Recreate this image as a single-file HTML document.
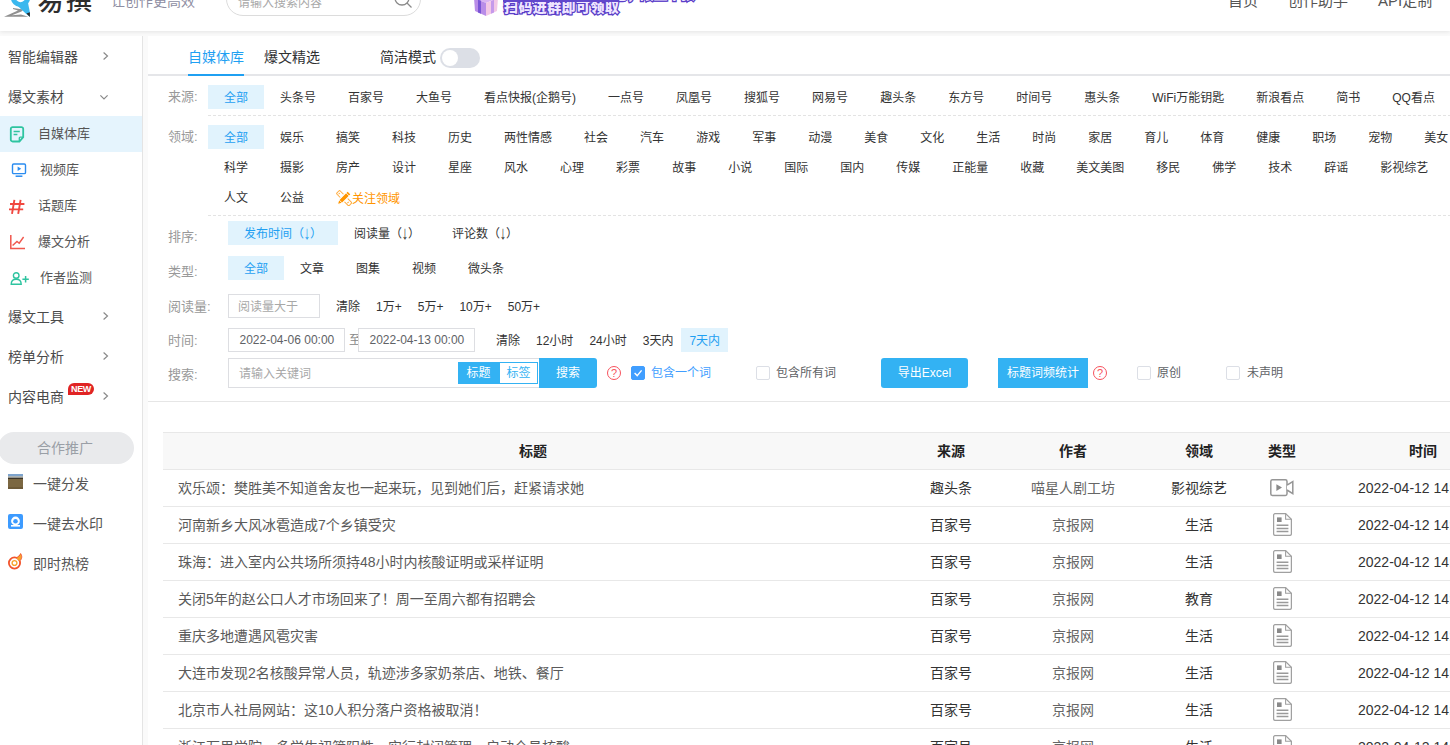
<!DOCTYPE html>
<html lang="zh-CN">
<head>
<meta charset="utf-8">
<title>易撰 - 自媒体库</title>
<style>
*{box-sizing:border-box;margin:0;padding:0}
html,body{width:1450px;height:745px;overflow:hidden;background:#fff}
body{font-family:"Liberation Sans","Noto Sans CJK SC",sans-serif;font-size:12px;color:#333;position:relative}
a{text-decoration:none;color:inherit}
#gap{position:absolute;left:0;top:31px;width:1450px;height:714px;background:#fafafa}
#hdr{position:absolute;left:0;top:0;width:1450px;height:31px;background:#fff;box-shadow:0 1px 4px rgba(0,0,0,.085);z-index:5}
#hdr .t{position:absolute;white-space:nowrap}
#side{position:absolute;left:0;top:36px;width:143px;height:709px;background:#fff;border-right:1px solid #e4e4e4}
#side .m{position:absolute;left:8px;font-size:14px;color:#4a4a4a;white-space:nowrap;line-height:20px;height:20px}
#side .s{position:absolute;left:0;width:142px;height:36px;font-size:13px;color:#555;line-height:36px;white-space:nowrap}
#side .s.on{background:#e5f4fd}
#side .s span{position:absolute;top:0}
#side .s svg,#side .p svg{position:absolute}
#side .p{position:absolute;left:0;width:142px;height:40px;font-size:14px;color:#555;line-height:40px;white-space:nowrap}
#side .p span{position:absolute;left:33px;top:0}
#side .arr{position:absolute}
#main{position:absolute;left:148px;top:36px;width:1302px;height:709px;background:#fff}
.lbl{position:absolute;left:168px;font-size:13px;color:#999;line-height:20px;height:20px;white-space:nowrap}
.row{position:absolute;white-space:nowrap;font-size:0;height:24px}
.row a{display:inline-block;font-size:12px;color:#333;padding:0 16px;height:24px;line-height:26px;vertical-align:top}
.row.n a{padding:0 8px}
.dn{display:inline-block;transform:translateY(-.8px) scale(1.15,1.55)}
.row a.on{background:#e1f3fd;color:#1fa0f2}
.dash{position:absolute;left:208px;width:1242px;height:1px;background:repeating-linear-gradient(90deg,#e3e3e3 0,#e3e3e3 3px,transparent 3px,transparent 5px)}
.inp{position:absolute;border:1px solid #dddee2;background:#fff;font-size:12px;color:#606266;white-space:nowrap}
.btn{position:absolute;background:#33b2f3;color:#fff;font-size:12px;text-align:center;white-space:nowrap}
.cb{position:absolute;width:14px;height:14px;border:1px solid #dcdfe6;border-radius:2px;background:#fff}
.txt{position:absolute;font-size:12px;color:#606266;white-space:nowrap;line-height:20px;height:20px}
.q{position:absolute;width:14px;height:14px;border:1px solid #f7525d;border-radius:50%;color:#f7525d;font-size:11px;line-height:12px;text-align:center}
#tb{position:absolute;left:163px;top:432px;width:1287px;height:313px;overflow:hidden}
#tb .h{position:absolute;left:0;top:0;width:1287px;height:38px;background:#f8f8f8;border-top:1px solid #e8e8e8;border-bottom:1px solid #e8e8e8}
#tb .r{position:absolute;left:0;width:1287px;height:37px;border-bottom:1px solid #e8e8e8}
#tb .c{position:absolute;top:0;height:36px;line-height:36px;font-size:14px;white-space:nowrap;text-align:center;color:#333}
#tb .c.au{color:#666}
#tb .c.ti{text-align:left;color:#5a5a5a}
#tb .h .c{font-weight:bold;color:#222}
#tb svg{position:absolute}

.bn{font-size:14px;line-height:16px;font-weight:900;color:#efe6ff;letter-spacing:.4px;-webkit-text-stroke:2.5px #5a3ec8;paint-order:stroke fill;text-shadow:0 1px 0 #5a3ec8}
</style>
</head>
<body>
<div id="gap"></div>

<div id="hdr">
<svg style="position:absolute;left:0;top:0;overflow:visible" width="40" height="20" viewBox="0 0 40 20">
<polygon points="13,8 23.5,9.6 21.5,11.6 12,15.2 21,14.6 28.5,16.8 4,16.8 18,10.6 13,8.9" fill="#909090"/>
<circle cx="20.5" cy="-2.5" r="7.2" fill="none" stroke="#3bb8ee" stroke-width="5"/>
<polygon points="16.2,4.6 27.6,0.5 30,13 29.8,16.8 26,13.8" fill="#3bb8ee"/>
<polygon points="26.4,13.6 29.9,12.2 29.9,16.9" fill="#2b2b2b"/>
</svg>
<div class="t" style="left:37.500px;top:-16.500px;font-size:26px;line-height:34px;font-weight:500;color:#2e2e2e;letter-spacing:2.500px">易撰</div>
<div class="t" style="left:111px;top:-9px;font-size:14px;line-height:20px;color:#8e8ea2">让创作更高效</div>
<div style="position:absolute;left:226px;top:-18px;width:195px;height:34px;border:1px solid #dcdcdc;border-radius:17px;background:#fff"></div>
<div class="t" style="left:238px;top:-7px;font-size:12px;line-height:20px;color:#a8a8a8">请输入搜索内容</div>
<svg style="position:absolute;left:392px;top:-12px" width="22" height="22" viewBox="0 0 22 22"><circle cx="10" cy="10" r="7" fill="none" stroke="#8a8a8a" stroke-width="1.3"/><path d="M15 15 L19.5 19.5" stroke="#8a8a8a" stroke-width="1.3" fill="none"/></svg>
<svg style="position:absolute;left:472px;top:-12px" width="28" height="28" viewBox="0 0 28 28">
<polygon points="2,10 14,6 26,10 14,15" fill="#d9b3f2"/>
<polygon points="2,10 14,15 14,28 3,23" fill="#b98de8"/>
<polygon points="26,10 14,15 14,28 25,23" fill="#f3c8e6"/>
<polygon points="6,11.5 9,12.8 9,25.8 6,24.4" fill="#7a55d6"/>
<polygon points="19,13 22,11.7 22,24.4 19,25.8" fill="#c59aeb"/>
<polygon points="8,4 14,8 20,4 17,2 14,6 11,2" fill="#8a5fe0"/>
</svg>
<div class="t bn" style="left:504px;top:-14px;letter-spacing:-.4px">新用户专享会员礼包，限量十张</div>
<div class="t bn" style="left:504px;top:-1px">扫码进群即可领取</div>
<div style="position:absolute;left:503px;top:0;width:116px;height:1.500px;background:#6248cc"></div>
<div class="t" style="left:1228px;top:-10px;font-size:15px;line-height:22px;color:#555">首页</div>
<div class="t" style="left:1288px;top:-10px;font-size:15px;line-height:22px;color:#555">创作助手</div>
<div class="t" style="left:1378px;top:-10px;font-size:15px;line-height:22px;color:#555">API定制</div>
</div>
<div id="side">
<div class="m" style="top:11px">智能编辑器</div>
<svg class="arr" style="left:102px;top:15px" width="8" height="12" viewBox="0 0 8 12"><path d="M1.600 1.500 L5.500 5 L1.600 8.500" fill="none" stroke="#888" stroke-width="1.15"/></svg>
<div class="m" style="top:51px">爆文素材</div>
<svg class="arr" style="left:98px;top:57px" width="12" height="8" viewBox="0 0 12 8"><path d="M2.400 2.400 L6 6 L9.600 2.400" fill="none" stroke="#888" stroke-width="1.15"/></svg>
<div class="s on" style="top:80px"><svg style="left:9px;top:10px" width="16" height="17" viewBox="0 0 16 17"><path d="M3.6 1.1h8.8a1.8 1.8 0 0 1 1.8 1.8v8.2l-3.8 4.4H3.6a1.8 1.8 0 0 1-1.8-1.8V2.900a1.8 1.8 0 0 1 1.8-1.8z" fill="none" stroke="#2ec4a0" stroke-width="1.8"/><path d="M4.6 5.4h6.2M4.6 8.4h3.8" stroke="#2ec4a0" stroke-width="1.5" fill="none"/><path d="M14 11.200h-2.800a.9.9 0 0 0-.9.9v3.2" stroke="#2ec4a0" stroke-width="1.3" fill="none"/></svg><span style="left:38px">自媒体库</span></div>
<div class="s" style="top:116px"><svg style="left:11px;top:10px" width="16" height="16" viewBox="0 0 16 16"><rect x="1.5" y="2" width="13" height="9.6" rx="1.2" fill="none" stroke="#2a8cf0" stroke-width="1.4"/><path d="M6.6 4.6v4.4l3.6-2.2z" fill="#2a8cf0"/><path d="M4.6 14.2h6.8" stroke="#2a8cf0" stroke-width="1.5"/></svg><span style="left:40px">视频库</span></div>
<div class="s" style="top:152px"><svg style="left:8px;top:10px" width="18" height="16" viewBox="0 0 18 16"><path transform="translate(0,.8)" d="M6.4 1 L4 15 M12.6 1 L10.2 15 M2 5.2 H16.4 M1 10.6 H15.2" stroke="#f0473f" stroke-width="1.9" fill="none"/></svg><span style="left:38px">话题库</span></div>
<div class="s" style="top:188px"><svg style="left:9px;top:10px" width="17" height="16" viewBox="0 0 17 16"><path d="M1.8 1 V14.4 H16" stroke="#f0574d" stroke-width="1.5" fill="none"/><path d="M3.6 11.6 L8 7.4 L10.2 9.2 L14.6 3" stroke="#f0574d" stroke-width="1.4" fill="none"/></svg><span style="left:38px">爆文分析</span></div>
<div class="s" style="top:224px"><svg style="left:10px;top:12px" width="20" height="13" viewBox="0 0 20 13"><circle cx="6.2" cy="3.500" r="2.800" fill="none" stroke="#2ec4a0" stroke-width="1.4"/><path d="M1.2 12.2 c0-3.200 2-5 5-5 s5 1.800 5 5z" fill="none" stroke="#2ec4a0" stroke-width="1.4"/><path d="M15.600 4v6.400M12.400 7.200h6.400" stroke="#2ec4a0" stroke-width="1.5"/></svg><span style="left:40px">作者监测</span></div>
<div class="m" style="top:271px">爆文工具</div>
<svg class="arr" style="left:102px;top:275px" width="8" height="12" viewBox="0 0 8 12"><path d="M1.600 1.500 L5.500 5 L1.600 8.500" fill="none" stroke="#888" stroke-width="1.15"/></svg>
<div class="m" style="top:311px">榜单分析</div>
<svg class="arr" style="left:102px;top:315px" width="8" height="12" viewBox="0 0 8 12"><path d="M1.600 1.500 L5.500 5 L1.600 8.500" fill="none" stroke="#888" stroke-width="1.15"/></svg>
<div class="m" style="top:351px">内容电商<i style="position:absolute;left:60px;top:-4px;width:26px;height:12px;border-radius:6px 6px 6px 0;background:#e02424;color:#fff;font-size:9px;line-height:12px;font-style:normal;font-weight:bold;text-align:center;letter-spacing:-.3px">NEW</i></div>
<svg class="arr" style="left:102px;top:355px" width="8" height="12" viewBox="0 0 8 12"><path d="M1.600 1.500 L5.500 5 L1.600 8.500" fill="none" stroke="#888" stroke-width="1.15"/></svg>
<div style="position:absolute;left:-2px;top:396px;width:136px;height:32px;border-radius:16px;background:#e9eaec;color:#9a9fa6;font-size:14px;line-height:33px;text-align:center;padding-right:2px">合作推广</div>
<div class="p" style="top:428px"><svg style="left:8px;top:10px" width="15" height="15" viewBox="0 0 15 15"><rect x="0" y="0" width="15" height="15" fill="#7b6741"/><rect x="0" y="0" width="15" height="2.200" fill="#7da3cc"/><rect x="0" y="2.200" width="15" height="1.600" fill="#b9c3c9"/><rect x="0" y="3.800" width="15" height="1.200" fill="#3b3327"/><rect x="0" y="13" width="15" height="2" fill="#6d5a38"/></svg><span>一键分发</span></div>
<div class="p" style="top:468px"><svg style="left:8px;top:10px" width="15" height="15" viewBox="0 0 15 15"><rect x="0" y="0" width="15" height="15" rx="2" fill="#3d9bff"/><circle cx="7.500" cy="7" r="4.400" fill="#fff"/><circle cx="7.500" cy="7.200" r="2.300" fill="#3d9bff"/><rect x="3" y="11" width="9" height="1.600" fill="#fff"/></svg><span>一键去水印</span></div>
<div class="p" style="top:508px"><svg style="left:7px;top:9px" width="17" height="17" viewBox="0 0 17 17"><circle cx="7.5" cy="10" r="5.6" fill="none" stroke="#f2542d" stroke-width="1.8"/><path d="M7.5 10 m-2.4 0 a2.4 2.4 0 1 0 4.8 0 a2.4 2.4 0 1 0 -4.8 0" fill="none" stroke="#f7a32b" stroke-width="1.4"/><path d="M9 5 C11 4 13 2.4 13.6 0.6 C15.4 3 15 6.2 12.6 8" fill="#f7a32b" stroke="#f2542d" stroke-width="1"/></svg><span>即时热榜</span></div>
</div>
<div id="main"></div>
<div style="position:absolute;left:148px;top:74px;width:1302px;height:2px;background:#e5e6e9"></div>
<div style="position:absolute;left:188px;top:74px;width:56px;height:2px;background:#1fa0f2"></div>
<div class="txt" style="left:188px;top:47px;font-size:14px;color:#1fa0f2">自媒体库</div>
<div class="txt" style="left:264px;top:47px;font-size:14px;color:#303133">爆文精选</div>
<div class="txt" style="left:380px;top:47px;font-size:14px;color:#303133">简洁模式</div>
<div style="position:absolute;left:440px;top:48px;width:40px;height:20px;border-radius:10px;background:#dcdfe6"><i style="position:absolute;left:2px;top:2px;width:16px;height:16px;border-radius:50%;background:#fff"></i></div>
<div class="lbl" style="top:87px">来源:</div>
<div class="row " style="left:208px;top:85px"><a class="on">全部</a><a>头条号</a><a>百家号</a><a>大鱼号</a><a>看点快报(企鹅号)</a><a>一点号</a><a>凤凰号</a><a>搜狐号</a><a>网易号</a><a>趣头条</a><a>东方号</a><a>时间号</a><a>惠头条</a><a>WiFi万能钥匙</a><a>新浪看点</a><a>简书</a><a>QQ看点</a></div>
<div class="dash" style="top:115px"></div>
<div class="lbl" style="top:127px">领域:</div>
<div class="row " style="left:208px;top:125px"><a class="on">全部</a><a>娱乐</a><a>搞笑</a><a>科技</a><a>历史</a><a>两性情感</a><a>社会</a><a>汽车</a><a>游戏</a><a>军事</a><a>动漫</a><a>美食</a><a>文化</a><a>生活</a><a>时尚</a><a>家居</a><a>育儿</a><a>体育</a><a>健康</a><a>职场</a><a>宠物</a><a>美女</a></div>
<div class="row " style="left:208px;top:155px"><a>科学</a><a>摄影</a><a>房产</a><a>设计</a><a>星座</a><a>风水</a><a>心理</a><a>彩票</a><a>故事</a><a>小说</a><a>国际</a><a>国内</a><a>传媒</a><a>正能量</a><a>收藏</a><a>美文美图</a><a>移民</a><a>佛学</a><a>技术</a><a>辟谣</a><a>影视综艺</a></div>
<div class="row " style="left:208px;top:185px"><a>人文</a><a>公益</a></div>
<svg style="position:absolute;left:336px;top:190px" width="16" height="16" viewBox="0 0 16 16"><rect x="-2.300" y="-8.600" width="4.600" height="17.600" rx="1" transform="translate(8,8) rotate(-45)" fill="#fff" stroke="#ffab3d" stroke-width="1"/><path d="M-1.200 -6.500 h1.800 M-1.200 6 h1.800" transform="translate(8,8) rotate(-45)" stroke="#ffab3d" stroke-width="1"/><g transform="translate(7.700,8.300) rotate(45)"><path d="M-2.400 -8 h4.800 v12.800 l-2.400 4.200 l-2.400 -4.200 z" fill="#ff9500" stroke="#fff" stroke-width="1.200"/><path d="M-3 -5.500 h6 M-3 4.400 h6" stroke="#fff" stroke-width=".8"/></g></svg>
<div class="txt" style="left:352px;top:189px;color:#ff9500">关注领域</div>
<div class="dash" style="top:215px"></div>
<div class="lbl" style="top:227px">排序:</div>
<div class="row " style="left:228px;top:221px"><a class="on">发布时间（<span class="dn">↓</span>）</a><a>阅读量（<span class="dn">↓</span>）</a><a>评论数（<span class="dn">↓</span>）</a></div>
<div class="lbl" style="top:262px">类型:</div>
<div class="row " style="left:228px;top:256px"><a class="on">全部</a><a>文章</a><a>图集</a><a>视频</a><a>微头条</a></div>
<div class="lbl" style="top:297px">阅读量:</div>
<div class="inp" style="left:228px;top:294px;width:92px;height:24px;line-height:24px;padding-left:9px;color:#a8a8a8">阅读量大于</div>
<div class="row n" style="left:328px;top:294px"><a>清除</a><a>1万+</a><a>5万+</a><a>10万+</a><a>50万+</a></div>
<div class="lbl" style="top:331px">时间:</div>
<div class="txt" style="left:349px;top:330px;color:#888">至</div>
<div class="inp" style="left:228px;top:328px;width:117px;height:24px;line-height:23px;padding-left:10.500px">2022-04-06 00:00</div>
<div class="inp" style="left:358px;top:328px;width:117px;height:24px;line-height:23px;padding-left:10.500px">2022-04-13 00:00</div>
<div class="row n" style="left:488px;top:328px"><a>清除</a><a>12小时</a><a>24小时</a><a>3天内</a><a class="on">7天内</a></div>
<div class="lbl" style="top:365px">搜索:</div>
<div class="inp" style="left:228px;top:358px;width:313px;height:30px;line-height:30px;padding-left:10px;color:#a8a8a8">请输入关键词</div>
<div class="btn" style="left:458px;top:362px;width:41px;height:22px;line-height:22px">标题</div>
<div class="btn" style="left:499px;top:362px;width:39px;height:22px;line-height:20px;background:#fff;color:#33b2f3;border:1px solid #33b2f3">标签</div>
<div class="btn" style="left:539px;top:358px;width:58px;height:30px;line-height:30px;border-radius:0 3px 3px 0">搜索</div>
<div class="q" style="left:607px;top:366px">?</div>
<div class="cb" style="left:631px;top:366px;background:#409eff;border-color:#409eff"><svg style="position:absolute;left:0;top:0" width="12" height="12" viewBox="0 0 12 12"><path d="M2.6 6 L5.2 8.6 L9.6 3.4" fill="none" stroke="#fff" stroke-width="1.4"/></svg></div>
<div class="txt" style="left:651px;top:363px;color:#409eff">包含一个词</div>
<div class="cb" style="left:756px;top:366px"></div>
<div class="txt" style="left:776px;top:363px">包含所有词</div>
<div class="btn" style="left:881px;top:358px;width:87px;height:30px;line-height:30px;border-radius:3px">导出Excel</div>
<div class="btn" style="left:998px;top:358px;width:90px;height:30px;line-height:30px">标题词频统计</div>
<div class="q" style="left:1093px;top:366px">?</div>
<div class="cb" style="left:1137px;top:366px"></div>
<div class="txt" style="left:1157px;top:363px">原创</div>
<div class="cb" style="left:1226px;top:366px"></div>
<div class="txt" style="left:1247px;top:363px">未声明</div>
<div style="position:absolute;left:148px;top:401px;width:1302px;height:1px;background:#e6e6e6"></div>
<div id="tb">
<div class="h">
<div class="c" style="left:0px;width:740px">标题</div>
<div class="c" style="left:740px;width:96px">来源</div>
<div class="c" style="left:836px;width:148px">作者</div>
<div class="c" style="left:984px;width:104px">领域</div>
<div class="c" style="left:1088px;width:62px">类型</div>
<div class="c" style="left:1150px;width:220px">时间</div>
</div>
<div class="r" style="top:38px">
<div class="c ti" style="left:15px;width:725px">欢乐颂：樊胜美不知道舍友也一起来玩，见到她们后，赶紧请求她</div>
<div class="c" style="left:740px;width:96px">趣头条</div>
<div class="c au" style="left:836px;width:148px">喵星人剧工坊</div>
<div class="c" style="left:984px;width:104px">影视综艺</div>
<svg style="left:1107px;top:9px" width="24" height="18" viewBox="0 0 24 18"><rect x=".8" y=".8" width="16.2" height="15.6" rx="1.6" fill="#fff" stroke="#969696" stroke-width="1.5"/><path d="M17 6.2 L22.800 2.600 V14.600 L17 11" fill="#fff" stroke="#969696" stroke-width="1.5"/><path d="M6.4 5.2 V12 L12 8.6 Z" fill="#8a8a8a"/></svg>
<div class="c" style="left:1150px;width:220px">2022-04-12 14:35:27</div>
</div>
<div class="r" style="top:75px">
<div class="c ti" style="left:15px;width:725px">河南新乡大风冰雹造成7个乡镇受灾</div>
<div class="c" style="left:740px;width:96px">百家号</div>
<div class="c au" style="left:836px;width:148px">京报网</div>
<div class="c" style="left:984px;width:104px">生活</div>
<svg style="left:1110px;top:6px" width="19" height="23" viewBox="0 0 19 23"><path d="M2.2 .6 H12.6 L18.4 6.2 V20.8 a1.6 1.6 0 0 1 -1.6 1.6 H2.2 A1.6 1.6 0 0 1 .6 20.8 V2.2 A1.6 1.6 0 0 1 2.2 .6 Z" fill="#fff" stroke="#a0a0a0" stroke-width="1.25"/><path d="M12.6 .6 V6.2 H18.4" fill="none" stroke="#a0a0a0" stroke-width="1.1"/><rect x="4" y="4.4" width="4.6" height="4.6" fill="#8a8a8a"/><path d="M3.6 12.2 H15.4 M3.6 15.4 H15.4 M3.6 18.6 H15.4" stroke="#9a9a9a" stroke-width="1.5"/></svg>
<div class="c" style="left:1150px;width:220px">2022-04-12 14:35:18</div>
</div>
<div class="r" style="top:112px">
<div class="c ti" style="left:15px;width:725px">珠海：进入室内公共场所须持48小时内核酸证明或采样证明</div>
<div class="c" style="left:740px;width:96px">百家号</div>
<div class="c au" style="left:836px;width:148px">京报网</div>
<div class="c" style="left:984px;width:104px">生活</div>
<svg style="left:1110px;top:6px" width="19" height="23" viewBox="0 0 19 23"><path d="M2.2 .6 H12.6 L18.4 6.2 V20.8 a1.6 1.6 0 0 1 -1.6 1.6 H2.2 A1.6 1.6 0 0 1 .6 20.8 V2.2 A1.6 1.6 0 0 1 2.2 .6 Z" fill="#fff" stroke="#a0a0a0" stroke-width="1.25"/><path d="M12.6 .6 V6.2 H18.4" fill="none" stroke="#a0a0a0" stroke-width="1.1"/><rect x="4" y="4.4" width="4.6" height="4.6" fill="#8a8a8a"/><path d="M3.6 12.2 H15.4 M3.6 15.4 H15.4 M3.6 18.6 H15.4" stroke="#9a9a9a" stroke-width="1.5"/></svg>
<div class="c" style="left:1150px;width:220px">2022-04-12 14:34:56</div>
</div>
<div class="r" style="top:149px">
<div class="c ti" style="left:15px;width:725px">关闭5年的赵公口人才市场回来了！周一至周六都有招聘会</div>
<div class="c" style="left:740px;width:96px">百家号</div>
<div class="c au" style="left:836px;width:148px">京报网</div>
<div class="c" style="left:984px;width:104px">教育</div>
<svg style="left:1110px;top:6px" width="19" height="23" viewBox="0 0 19 23"><path d="M2.2 .6 H12.6 L18.4 6.2 V20.8 a1.6 1.6 0 0 1 -1.6 1.6 H2.2 A1.6 1.6 0 0 1 .6 20.8 V2.2 A1.6 1.6 0 0 1 2.2 .6 Z" fill="#fff" stroke="#a0a0a0" stroke-width="1.25"/><path d="M12.6 .6 V6.2 H18.4" fill="none" stroke="#a0a0a0" stroke-width="1.1"/><rect x="4" y="4.4" width="4.6" height="4.6" fill="#8a8a8a"/><path d="M3.6 12.2 H15.4 M3.6 15.4 H15.4 M3.6 18.6 H15.4" stroke="#9a9a9a" stroke-width="1.5"/></svg>
<div class="c" style="left:1150px;width:220px">2022-04-12 14:34:41</div>
</div>
<div class="r" style="top:186px">
<div class="c ti" style="left:15px;width:725px">重庆多地遭遇风雹灾害</div>
<div class="c" style="left:740px;width:96px">百家号</div>
<div class="c au" style="left:836px;width:148px">京报网</div>
<div class="c" style="left:984px;width:104px">生活</div>
<svg style="left:1110px;top:6px" width="19" height="23" viewBox="0 0 19 23"><path d="M2.2 .6 H12.6 L18.4 6.2 V20.8 a1.6 1.6 0 0 1 -1.6 1.6 H2.2 A1.6 1.6 0 0 1 .6 20.8 V2.2 A1.6 1.6 0 0 1 2.2 .6 Z" fill="#fff" stroke="#a0a0a0" stroke-width="1.25"/><path d="M12.6 .6 V6.2 H18.4" fill="none" stroke="#a0a0a0" stroke-width="1.1"/><rect x="4" y="4.4" width="4.6" height="4.6" fill="#8a8a8a"/><path d="M3.6 12.2 H15.4 M3.6 15.4 H15.4 M3.6 18.6 H15.4" stroke="#9a9a9a" stroke-width="1.5"/></svg>
<div class="c" style="left:1150px;width:220px">2022-04-12 14:34:29</div>
</div>
<div class="r" style="top:223px">
<div class="c ti" style="left:15px;width:725px">大连市发现2名核酸异常人员，轨迹涉多家奶茶店、地铁、餐厅</div>
<div class="c" style="left:740px;width:96px">百家号</div>
<div class="c au" style="left:836px;width:148px">京报网</div>
<div class="c" style="left:984px;width:104px">生活</div>
<svg style="left:1110px;top:6px" width="19" height="23" viewBox="0 0 19 23"><path d="M2.2 .6 H12.6 L18.4 6.2 V20.8 a1.6 1.6 0 0 1 -1.6 1.6 H2.2 A1.6 1.6 0 0 1 .6 20.8 V2.2 A1.6 1.6 0 0 1 2.2 .6 Z" fill="#fff" stroke="#a0a0a0" stroke-width="1.25"/><path d="M12.6 .6 V6.2 H18.4" fill="none" stroke="#a0a0a0" stroke-width="1.1"/><rect x="4" y="4.4" width="4.6" height="4.6" fill="#8a8a8a"/><path d="M3.6 12.2 H15.4 M3.6 15.4 H15.4 M3.6 18.6 H15.4" stroke="#9a9a9a" stroke-width="1.5"/></svg>
<div class="c" style="left:1150px;width:220px">2022-04-12 14:34:12</div>
</div>
<div class="r" style="top:260px">
<div class="c ti" style="left:15px;width:725px">北京市人社局网站：这10人积分落户资格被取消！</div>
<div class="c" style="left:740px;width:96px">百家号</div>
<div class="c au" style="left:836px;width:148px">京报网</div>
<div class="c" style="left:984px;width:104px">生活</div>
<svg style="left:1110px;top:6px" width="19" height="23" viewBox="0 0 19 23"><path d="M2.2 .6 H12.6 L18.4 6.2 V20.8 a1.6 1.6 0 0 1 -1.6 1.6 H2.2 A1.6 1.6 0 0 1 .6 20.8 V2.2 A1.6 1.6 0 0 1 2.2 .6 Z" fill="#fff" stroke="#a0a0a0" stroke-width="1.25"/><path d="M12.6 .6 V6.2 H18.4" fill="none" stroke="#a0a0a0" stroke-width="1.1"/><rect x="4" y="4.4" width="4.6" height="4.6" fill="#8a8a8a"/><path d="M3.6 12.2 H15.4 M3.6 15.4 H15.4 M3.6 18.6 H15.4" stroke="#9a9a9a" stroke-width="1.5"/></svg>
<div class="c" style="left:1150px;width:220px">2022-04-12 14:33:58</div>
</div>
<div class="r" style="top:297px">
<div class="c ti" style="left:15px;width:725px">浙江万里学院，多学生初筛阳性，实行封闭管理，启动全员核酸</div>
<div class="c" style="left:740px;width:96px">百家号</div>
<div class="c au" style="left:836px;width:148px">京报网</div>
<div class="c" style="left:984px;width:104px">生活</div>
<svg style="left:1110px;top:6px" width="19" height="23" viewBox="0 0 19 23"><path d="M2.2 .6 H12.6 L18.4 6.2 V20.8 a1.6 1.6 0 0 1 -1.6 1.6 H2.2 A1.6 1.6 0 0 1 .6 20.8 V2.2 A1.6 1.6 0 0 1 2.2 .6 Z" fill="#fff" stroke="#a0a0a0" stroke-width="1.25"/><path d="M12.6 .6 V6.2 H18.4" fill="none" stroke="#a0a0a0" stroke-width="1.1"/><rect x="4" y="4.4" width="4.6" height="4.6" fill="#8a8a8a"/><path d="M3.6 12.2 H15.4 M3.6 15.4 H15.4 M3.6 18.6 H15.4" stroke="#9a9a9a" stroke-width="1.5"/></svg>
<div class="c" style="left:1150px;width:220px">2022-04-12 14:33:40</div>
</div>
</div>
</body>
</html>
